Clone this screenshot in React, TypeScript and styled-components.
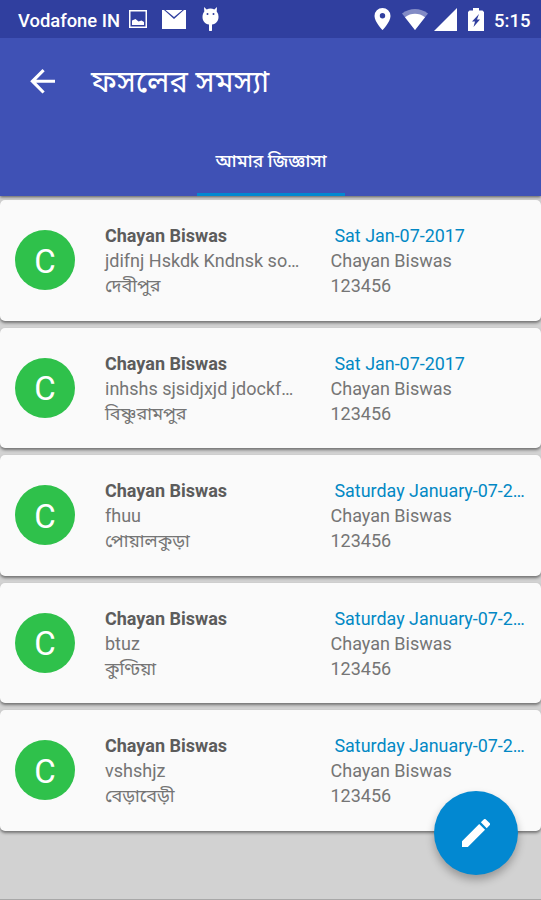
import React from "react";
import styled, { createGlobalStyle } from "styled-components";

const GlobalStyle = createGlobalStyle`
  * { box-sizing: border-box; }
  body {
    margin: 0;
    background: #d2d2d2;
    font-family: Roboto, "Noto Sans Bengali", "Noto Sans", sans-serif;
  }
`;

const Screen = styled.div`
  position: relative;
  width: 541px;
  height: 900px;
  overflow: hidden;
  background: #d2d2d2;
`;

const Header = styled.header`
  position: relative;
  height: 196px;
  background: #3f51b5;
  color: #fff;
  box-shadow: 0 1px 3px rgba(0, 0, 0, 0.6);
`;

const StatusBar = styled.div`
  display: flex;
  align-items: center;
  justify-content: space-between;
  height: 38px;
  padding: 0 11px 0 18px;
  background: #303f9f;
`;

const StatusGroup = styled.div`
  display: flex;
  align-items: center;
`;

const Carrier = styled.span`
  width: 111px;
  margin-top: 3px;
  font-size: 18.4px;
  line-height: 22px;
  font-weight: 500;
  white-space: nowrap;
`;

const Clock = styled.span`
  width: 36px;
  margin: 3px 0 0 10px;
  font-size: 18.5px;
  line-height: 22px;
  font-weight: 500;
  white-space: nowrap;
`;

const Glyph = styled.svg<{ $left?: number }>`
  display: block;
  flex: none;
  fill: #fff;
  margin-left: ${(p) => p.$left ?? 0}px;
`;

const Toolbar = styled.div`
  display: flex;
  align-items: center;
  height: 86px;
  padding-left: 30px;
`;

const Title = styled.h1`
  margin: 2px 0 0 35px;
  font-size: 30.8px;
  line-height: 36px;
  font-weight: 400;
  white-space: nowrap;
`;

const TabBar = styled.nav`
  display: flex;
  justify-content: center;
  height: 72px;
`;

const Tab = styled.div`
  display: flex;
  align-items: center;
  justify-content: center;
  width: 148px;
  padding: 4px 0 0 1px;
  border-bottom: 3px solid #0288d1;
  font-size: 18px;
  line-height: 24px;
  font-weight: 500;
  white-space: nowrap;
`;

const List = styled.main`
  display: flex;
  flex-direction: column;
  gap: 7.1px;
  padding-top: 4px;
`;

const Card = styled.article`
  display: grid;
  grid-template-columns: 60px 195.5px 196px;
  column-gap: 30px;
  height: 120.5px;
  padding: 23px 0 0 15px;
  border-radius: 5px;
  background: #fafafa;
  box-shadow: 0 2px 3px rgba(0, 0, 0, 0.45);
`;

const Avatar = styled.div`
  display: flex;
  align-items: center;
  justify-content: center;
  width: 60px;
  height: 60px;
  margin-top: 7px;
  padding-top: 2px;
  border-radius: 50%;
  background: #2fc14b;
  color: #fff;
  font-size: 33px;
`;

const Column = styled.div`
  min-width: 0;
`;

const Line = styled.div<{ $tone?: "name" | "date" }>`
  height: 25px;
  white-space: nowrap;
  font-size: ${(p) => (p.$tone === "date" ? 17.9 : 18)}px;
  line-height: 25px;
  color: ${(p) => (p.$tone === "date" ? "#0288c4" : p.$tone === "name" ? "#5c5c5c" : "#757575")};
  font-weight: ${(p) => (p.$tone === "name" ? 700 : 400)};
  padding-left: ${(p) => (p.$tone === "date" ? 4 : 0)}px;
`;

const Fab = styled.button`
  position: absolute;
  left: 434px;
  top: 791px;
  display: flex;
  align-items: center;
  justify-content: center;
  width: 84px;
  height: 84px;
  padding: 0;
  border: 0;
  border-radius: 50%;
  background: #0288d1;
  box-shadow: 0 5px 9px rgba(0, 0, 0, 0.28);
`;

const BottomEdge = styled.div`
  position: absolute;
  left: 0;
  right: 0;
  bottom: 0;
  height: 1px;
  background: #a8a8a8;
`;

const questions = [
  { text: "jdifnj Hskdk Kndnsk so…", place: "দেবীপুর", date: "Sat Jan-07-2017" },
  { text: "inhshs sjsidjxjd jdockf…", place: "বিষ্ণুরামপুর", date: "Sat Jan-07-2017" },
  { text: "fhuu", place: "পোয়ালকুড়া", date: "Saturday January-07-2…" },
  { text: "btuz", place: "কুণ্ঢিয়া", date: "Saturday January-07-2…" },
  { text: "vshshjz", place: "বেড়াবেড়ী", date: "Saturday January-07-2…" },
];

export default function App() {
  return (
    <Screen>
      <GlobalStyle />
      <Header>
        <StatusBar>
          <StatusGroup>
            <Carrier>Vodafone IN</Carrier>
            <Glyph width="18" height="18" viewBox="0 0 18 18">
              <path fillRule="evenodd" d="M0 0h18v18H0zM1.500 1.500v15h15v-15zM3 15V10.500l3.500-1.500 3 2.500 3-1 2.500 1.500v3z" />
            </Glyph>
            <Glyph $left={15} width="24" height="19" viewBox="0 0 24 19">
              <path d="M0 0h2l10 9 10-9h2v19H0zM3.500 0h17L12 7z" />
            </Glyph>
            <Glyph $left={16} width="17" height="24" viewBox="0 0 17 24">
              <path fillRule="evenodd" d="M2 0l2.700 2.400a9 9 0 0 1 7.600 0L15 0l-.3 4.500A8 8 0 0 1 16.500 10c0 4-2.500 7-6.500 7.500V23a1.500 1.500 0 0 1-3 0v-5.500C3 17 .5 14 .5 10c0-2 .6-4 1.800-5.500zM5.500 6a1 1 0 1 0 0 2 1 1 0 0 0 0-2zM11.500 6a1 1 0 1 0 0 2 1 1 0 0 0 0-2z" />
            </Glyph>
          </StatusGroup>
          <StatusGroup>
            <Glyph width="17" height="22" viewBox="0 0 17 22">
              <path fillRule="evenodd" d="M8.500 0A8 8 0 0 0 .5 8c0 6 8 14 8 14s8-8 8-14a8 8 0 0 0-8-8zm0 5a2.700 2.700 0 1 1 0 5.400 2.700 2.700 0 0 1 0-5.400z" />
            </Glyph>
            <Glyph $left={11} width="26" height="21" viewBox="0 0 26 21">
              <path fillOpacity=".4" d="M0 4.500C7.500-1.500 18.500-1.500 26 4.500L13 21z" />
              <path d="M3 8.200c6-4.500 14-4.500 20 0L13 21z" />
            </Glyph>
            <Glyph $left={6} width="23" height="23" viewBox="0 0 23 23">
              <path d="M23 0v23H0z" />
            </Glyph>
            <Glyph $left={11} width="16" height="23" viewBox="0 0 16 23">
              <path fillRule="evenodd" d="M5 0h6v2.500h3.500L16 4v19H0V4l1.500-1.500H5zM11 6l-7 7.500h3L5.500 19l6.500-7.500H9z" />
            </Glyph>
            <Clock>5:15</Clock>
          </StatusGroup>
        </StatusBar>
        <Toolbar>
          <Glyph width="26" height="25" viewBox="0 0 26 25">
            <path d="M12.500 0l2.200 2.200-8.500 8.600H25v3H6.200l8.500 8.600-2.200 2.200L.2 12.300z" />
          </Glyph>
          <Title>ফসলের সমস্যা</Title>
        </Toolbar>
        <TabBar>
          <Tab>আমার জিজ্ঞাসা</Tab>
        </TabBar>
      </Header>
      <List>
        {questions.map((q) => (
          <Card key={q.place}>
            <Avatar>C</Avatar>
            <Column>
              <Line $tone="name">Chayan Biswas</Line>
              <Line>{q.text}</Line>
              <Line>{q.place}</Line>
            </Column>
            <Column>
              <Line $tone="date">{q.date}</Line>
              <Line>Chayan Biswas</Line>
              <Line>123456</Line>
            </Column>
          </Card>
        ))}
      </List>
      <Fab aria-label="Edit">
        <Glyph width="28" height="28" viewBox="3 3 18 18">
          <path d="M3 17.250V21h3.750L17.810 9.940l-3.750-3.750L3 17.250zM20.710 7.040a1 1 0 0 0 0-1.410l-2.340-2.340a1 1 0 0 0-1.410 0l-1.830 1.830 3.750 3.750 1.830-1.830z" />
        </Glyph>
      </Fab>
      <BottomEdge />
    </Screen>
  );
}
